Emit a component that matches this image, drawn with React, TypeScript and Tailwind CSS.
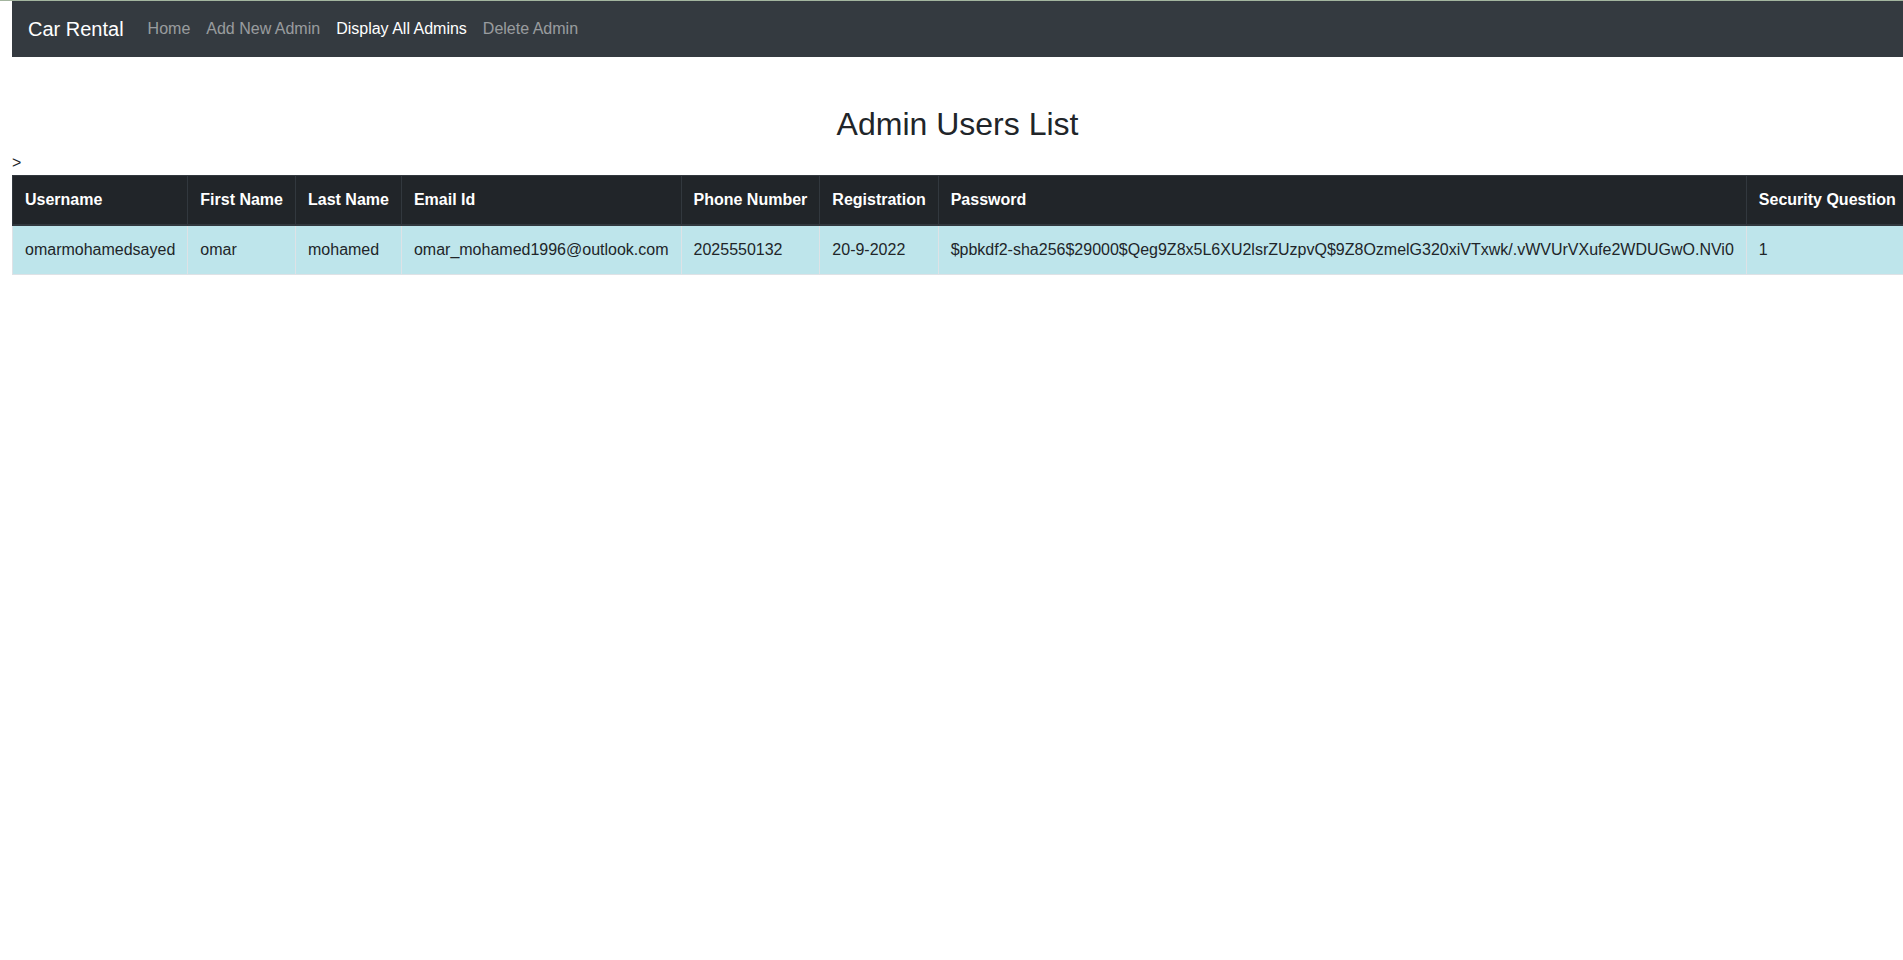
export default function App() {
  const headers = [
    "Username",
    "First Name",
    "Last Name",
    "Email Id",
    "Phone Number",
    "Registration",
    "Password",
    "Security Question",
  ];
  const rows = [
    [
      "omarmohamedsayed",
      "omar",
      "mohamed",
      "omar_mohamed1996@outlook.com",
      "2025550132",
      "20-9-2022",
      "$pbkdf2-sha256$29000$Qeg9Z8x5L6XU2lsrZUzpvQ$9Z8OzmelG320xiVTxwk/.vWVUrVXufe2WDUGwO.NVi0",
      "1",
    ],
  ];

  return (
    <div className="min-h-screen bg-white text-[#212529] font-['Liberation_Sans',Arial,sans-serif] text-base">
      <div className="h-px bg-[#a3b59f]" />
      <div className="pl-3">
        {/* Navbar */}
        <nav className="h-14 bg-[#343a40] flex items-center px-4">
          <span className="text-white text-xl leading-[30px] mr-4">Car Rental</span>
          <div className="flex items-center">
            <a className="px-2 text-white/50 leading-6">Home</a>
            <a className="px-2 text-white/50 leading-6">Add New Admin</a>
            <a className="px-2 text-white leading-6">Display All Admins</a>
            <a className="px-2 text-white/50 leading-6">Delete Admin</a>
          </div>
        </nav>

        <h2 className="text-[32px] leading-[1.2] text-center mt-12 mb-2">Admin Users List</h2>
        <div className="leading-6">&gt;</div>

        <table className="w-full border-collapse whitespace-nowrap">
          <thead>
            <tr className="bg-[#212529] text-white">
              {headers.map((h) => (
                <th
                  key={h}
                  className="text-left font-bold px-3 py-3 leading-6 border border-[#32383e] border-b-2"
                >
                  {h}
                </th>
              ))}
            </tr>
          </thead>
          <tbody>
            {rows.map((r, i) => (
              <tr key={i} className="bg-[#bee5eb]">
                {r.map((c, j) => (
                  <td key={j} className="px-3 py-3 leading-6 border border-[#dee2e6]">
                    {c}
                  </td>
                ))}
              </tr>
            ))}
          </tbody>
        </table>
      </div>
    </div>
  );
}
